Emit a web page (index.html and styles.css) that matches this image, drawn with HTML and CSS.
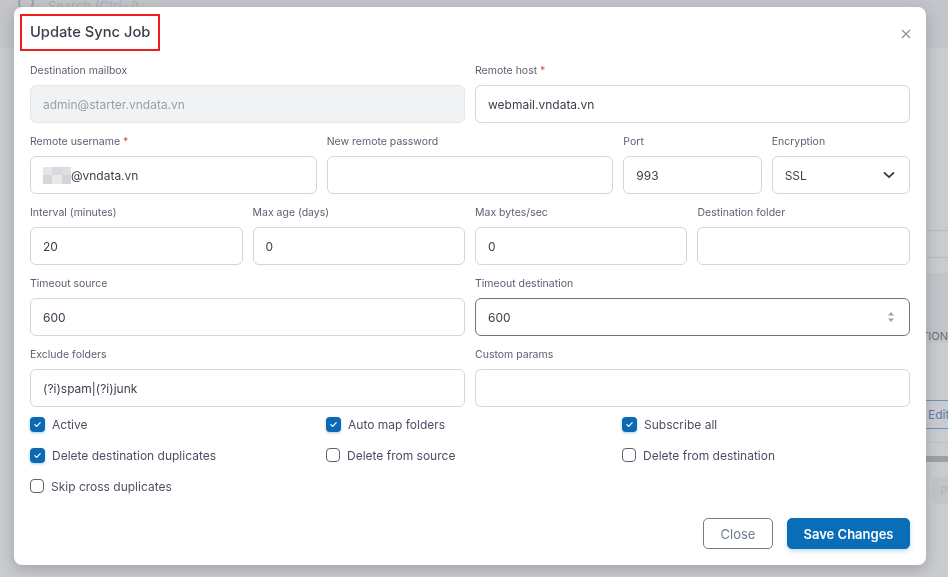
FILE: index.html
```html
<!DOCTYPE html>
<html lang="en">
<head>
  <meta charset="UTF-8" />
  <meta name="viewport" content="width=device-width, initial-scale=1" />
  <title>Update Sync Job</title>
  <link rel="stylesheet" href="styles.css">
</head>
<body>

  <!-- page behind the dialog -->
  <div class="page">
    <div class="topbar">
      <span class="search-icon"></span>
      <span class="search-text">Search (Ctrl+/)</span>
    </div>
    <div class="page-body">
      <div class="tbl-line first"></div>
      <div class="tbl-line"></div>
      <div class="tbl-head"><span>ACTIONS</span></div>
      <div class="tbl-row">
        <span class="edit-btn">Edit</span>
      </div>
      <div class="scroll-bar"></div>
      <div class="pager"><span>Prev</span></div>
    </div>
  </div>

  <div class="backdrop">
    <div class="modal">
      <div class="modal-header">
        <h5 class="modal-title">Update Sync Job</h5>
        <button class="btn-close" aria-label="Close">
          <svg width="10" height="10" viewBox="0 0 10 10"><path d="M1 1L9 9M9 1L1 9" stroke="#8a8f9b" stroke-width="1.1" fill="none"/></svg>
        </button>
      </div>

      <div class="modal-body">
        <div class="form-grid">
          <div class="field span-6">
            <label>Destination mailbox</label>
            <input class="input" type="text" value="admin@starter.vndata.vn" disabled>
          </div>
          <div class="field span-6">
            <label>Remote host <span class="req">*</span></label>
            <input class="input" type="text" value="webmail.vndata.vn">
          </div>

          <div class="field span-4">
            <label>Remote username <span class="req">*</span></label>
            <div class="input masked">
              <span class="blur">
                <i style="background:#e4e5e8"></i><i style="background:#d9dadd"></i><i style="background:#dedfe2"></i>
                <i style="background:#d6d7db"></i><i style="background:#e8e9eb"></i><i style="background:#d3d4d8"></i>
              </span>@vndata.vn
            </div>
          </div>
          <div class="field span-4">
            <label>New remote password</label>
            <input class="input" type="password" value="">
          </div>
          <div class="field span-2">
            <label>Port</label>
            <input class="input" type="text" value="993">
          </div>
          <div class="field span-2">
            <label>Encryption</label>
            <div class="select-wrap">
              <select class="input">
                <option>SSL</option>
                <option>TLS</option>
                <option>None</option>
              </select>
              <svg class="chevron" width="12" height="8" viewBox="0 0 12 8"><path d="M1.5 1.8L6 6.2L10.5 1.8" stroke="#30343f" stroke-width="1.7" fill="none" stroke-linecap="round" stroke-linejoin="round"/></svg>
            </div>
          </div>

          <div class="field span-3">
            <label>Interval (minutes)</label>
            <input class="input" type="text" value="20">
          </div>
          <div class="field span-3">
            <label>Max age (days)</label>
            <input class="input" type="text" value="0">
          </div>
          <div class="field span-3">
            <label>Max bytes/sec</label>
            <input class="input" type="text" value="0">
          </div>
          <div class="field span-3">
            <label>Destination folder</label>
            <input class="input" type="text" value="">
          </div>

          <div class="field span-6">
            <label>Timeout source</label>
            <input class="input" type="text" value="600">
          </div>
          <div class="field span-6">
            <label>Timeout destination</label>
            <div class="select-wrap">
              <input class="input focused" type="text" value="600">
              <svg class="spinner" width="8" height="12" viewBox="0 0 8 12"><path d="M4 1L7 4.5H1Z M4 11L7 7.5H1Z" fill="#9ca1ab"/></svg>
            </div>
          </div>

          <div class="field span-6">
            <label>Exclude folders</label>
            <input class="input" type="text" value="(?i)spam|(?i)junk">
          </div>
          <div class="field span-6">
            <label>Custom params</label>
            <input class="input" type="text" value="">
          </div>
        </div>

        <div class="checks">
          <label class="check"><input type="checkbox" checked><span class="box"></span>Active</label>
          <label class="check"><input type="checkbox" checked><span class="box"></span>Auto map folders</label>
          <label class="check"><input type="checkbox" checked><span class="box"></span>Subscribe all</label>
          <label class="check"><input type="checkbox" checked><span class="box"></span>Delete destination duplicates</label>
          <label class="check"><input type="checkbox"><span class="box"></span>Delete from source</label>
          <label class="check"><input type="checkbox"><span class="box"></span>Delete from destination</label>
          <label class="check"><input type="checkbox"><span class="box"></span>Skip cross duplicates</label>
        </div>
      </div>

      <div class="modal-footer">
        <button class="btn btn-outline">Close</button>
        <button class="btn btn-primary">Save Changes</button>
      </div>
    </div>
  </div>

</body>
</html>
```

FILE: styles.css
```css
body {
  margin: 0;
  padding: 0;
  font-family: Inter, 'Liberation Sans', sans-serif;
  background: #c7c9ce;
  color: #3a3f4c;
  overflow: hidden;
}

/* background page, already dimmed by the overlay */
.page {
  min-height: 577px;
  background: #c9cbcf;
}

.topbar {
  height: 48px;
  background: #c3c5ca;
  display: flex;
  align-items: flex-start;
  padding-left: 18px;
  gap: 14px;
}

.search-icon {
  width: 12px;
  height: 12px;
  margin-top: -5px;
  border: 2px solid #9fa2a9;
  border-radius: 50%;
}

.search-text {
  margin-top: -2px;
  font-size: 13px;
  color: #adafb5;
}

.page-body {
  margin-left: 926px;
  padding-top: 182px;
}

.tbl-line {
  height: 1px;
  background: #b9bbc1;
}

.tbl-line.first {
  margin-bottom: 26px;
}

.tbl-head {
  height: 70px;
  margin-top: 15px;
  background: #c2c4c9;
  display: flex;
  align-items: flex-end;
  margin-left: -20px;
  font-size: 11px;
  line-height: 14px;
  color: #6c6f77;
}

.tbl-row {
  height: 100px;
  border-bottom: 1px solid #bdbfc4;
  padding-top: 57px;
  box-sizing: border-box;
  white-space: nowrap;
}

.edit-btn {
  display: inline-block;
  margin-left: -13px;
  padding: 7px 8px 6px 14px;
  border: 1px solid #6c93bd;
  border-radius: 4px;
  font-size: 12px;
  line-height: 14px;
  color: #557fae;
}

.scroll-bar {
  height: 6px;
  margin-top: 13px;
  background: #9ea0a5;
}

.pager {
  padding: 15px 0 0 6px;
  white-space: nowrap;
}

.pager span {
  display: inline-block;
  padding: 6px 8px;
  background: #c2c4c9;
  border-radius: 6px;
  font-size: 12px;
  line-height: 15px;
  color: #b1b3b9;
}

/* dialog overlay */
.backdrop {
  position: fixed;
  inset: 0;
  padding: 7px 22px 0 14px;
}

.modal {
  width: 912px;
  background: #fff;
  border-radius: 8px;
  box-shadow: 0 4px 14px rgba(40, 44, 60, 0.25);
}

.modal-header {
  display: flex;
  align-items: flex-start;
  justify-content: space-between;
  padding: 7px 15px 0 6px;
}

.modal-title {
  margin: 0;
  padding: 6px 8px;
  border: 2px solid #ee1c1c;
  font-size: 14.7px;
  font-weight: 500;
  line-height: 21px;
  color: #3a3f4c;
}

.btn-close {
  margin-top: 15px;
  padding: 0;
  border: none;
  background: none;
  display: flex;
}

.modal-body {
  padding: 12px 16px 0;
}

.form-grid {
  display: grid;
  grid-template-columns: repeat(12, 1fr);
  column-gap: 10px;
  row-gap: 11px;
}

.span-2 { grid-column: span 2; }
.span-3 { grid-column: span 3; }
.span-4 { grid-column: span 4; }
.span-6 { grid-column: span 6; }

.field label {
  display: block;
  font-size: 10.5px;
  line-height: 16px;
  margin-bottom: 6px;
  color: #5b6170;
}

.req {
  color: #e5484d;
}

.input {
  display: block;
  width: 100%;
  height: 38px;
  box-sizing: border-box;
  padding: 0 12px;
  border: 1px solid #d3d5da;
  border-radius: 6px;
  background: #fff;
  font-family: Inter, 'Liberation Sans', sans-serif;
  font-size: 12px;
  color: #3a3f4c;
  outline: none;
}

.input:disabled {
  background: #f1f2f4;
  border-color: #e6e7ea;
  color: #9a9ea8;
}

.input.focused {
  border-color: #6f7480;
}

.masked {
  display: flex;
  align-items: center;
}

.blur {
  display: grid;
  grid-template-columns: repeat(3, 9.3px);
  grid-template-rows: repeat(2, 8.5px);
}

.blur i {
  display: block;
}

.select-wrap {
  position: relative;
}

select.input {
  appearance: none;
  -webkit-appearance: none;
}

.chevron {
  position: absolute;
  right: 15px;
  top: 15px;
  pointer-events: none;
}

.spinner {
  position: absolute;
  right: 15px;
  top: 13px;
}

.checks {
  display: grid;
  grid-template-columns: repeat(3, 1fr);
  column-gap: 8px;
  row-gap: 11px;
  margin-top: 7px;
}

.check {
  display: flex;
  align-items: center;
  gap: 7px;
  height: 20px;
  font-size: 12px;
  color: #4a5060;
}

.check input {
  display: none;
}

.check .box {
  width: 14px;
  height: 14px;
  border: 1.3px solid #5d6372;
  border-radius: 4px;
  box-sizing: border-box;
  flex: none;
}

.check input:checked + .box {
  border: none;
  width: 15px;
  height: 15px;
  background: #0b69b4 url("data:image/svg+xml,%3Csvg xmlns='http://www.w3.org/2000/svg' viewBox='0 0 15 15'%3E%3Cpath d='M4.8 7.6L6.7 9.4L10.2 5.6' stroke='white' stroke-width='1.2' fill='none' stroke-linecap='round' stroke-linejoin='round'/%3E%3C/svg%3E") center / 15px 15px no-repeat;
  box-shadow: 0 1px 3px rgba(11, 105, 180, 0.35);
}

.modal-footer {
  display: flex;
  justify-content: flex-end;
  gap: 14px;
  padding: 22px 16px 16px;
}

.btn {
  height: 31px;
  padding: 0;
  border-radius: 5px;
  font-family: Inter, 'Liberation Sans', sans-serif;
  font-size: 13px;
  white-space: nowrap;
  cursor: pointer;
}

.btn-outline {
  width: 70px;
  background: #fff;
  border: 1px solid #6f7b8f;
  color: #6f7b8f;
}

.btn-primary {
  width: 123px;
  background: #0a6db8;
  border: 1px solid #0a6db8;
  color: #fff;
  font-weight: 600;
  box-shadow: 0 2px 4px rgba(10, 109, 184, 0.25);
}
```
